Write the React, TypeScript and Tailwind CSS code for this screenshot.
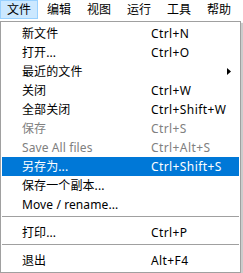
import React from 'react';

type Item =
  | { sep: true }
  | { label: string; key?: string; sub?: boolean; disabled?: boolean; active?: boolean; sep?: false };

const menus = ['文件', '编辑', '视图', '运行', '工具', '帮助'];

const items: Item[] = [
  { label: '新文件', key: 'Ctrl+N' },
  { label: '打开...', key: 'Ctrl+O' },
  { label: '最近的文件', sub: true },
  { label: '关闭', key: 'Ctrl+W' },
  { label: '全部关闭', key: 'Ctrl+Shift+W' },
  { label: '保存', key: 'Ctrl+S', disabled: true },
  { label: 'Save All files', key: 'Ctrl+Alt+S', disabled: true },
  { label: '另存为...', key: 'Ctrl+Shift+S', active: true },
  { label: '保存一个副本...' },
  { label: 'Move / rename...' },
  { sep: true },
  { label: '打印...', key: 'Ctrl+P' },
  { sep: true },
  { label: '退出', key: 'Alt+F4' },
];

const App = () => {
  return (
    <div
      className="w-[243px] h-[273px] bg-white overflow-hidden text-[12px] text-black"
      style={{ fontFamily: '"Noto Sans", "Noto Sans CJK SC", sans-serif' }}
    >
      {/* menubar */}
      <div className="flex h-[20px] gap-[2px]">
        {menus.map((m, i) => (
          <div
            key={m}
            className={`flex items-center h-[19px] px-[6px] leading-none border ${
              i === 0 ? 'bg-[#cce8ff] border-[#99d1ff]' : 'border-transparent'
            }`}
          >
            {m}
          </div>
        ))}
      </div>

      {/* dropdown */}
      <div className="mt-[1px] w-[241px] border border-[#a0a0a0] bg-white py-[2px] shadow-[2px_2px_1px_rgba(0,0,0,0.2)]">
        {items.map((it, i) =>
          it.sep ? (
            <div key={i} className="h-[9px] pt-[2px] mx-[1px]">
              <div className="h-[1px] bg-[#a0a0a0]" />
              <div className="h-[1px] bg-white" />
            </div>
          ) : (
            <div
              key={i}
              className={`flex items-center h-[19px] mx-[1px] pl-[20px] leading-none ${
                it.active ? 'bg-[#0078d7] text-white' : it.disabled ? 'text-[#808080]' : ''
              }`}
            >
              <span className="w-[129px] shrink-0 whitespace-nowrap tracking-[0.1px]">{it.label}</span>
              <span className="flex-1 whitespace-nowrap tracking-[0.4px]">{it.key}</span>
              {it.sub && (
                <svg width="4" height="7" viewBox="0 0 4 7" className="mr-[8px]">
                  <path d="M0 0 L4 3.5 L0 7 Z" fill="#000" />
                </svg>
              )}
            </div>
          )
        )}
      </div>
    </div>
  );
};

export default App;
